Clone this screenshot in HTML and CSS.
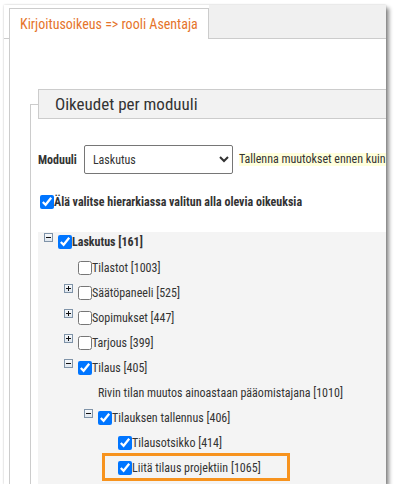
FILE: index.html
```html
<!DOCTYPE html>
<html lang="fi">
<head>
    <meta charset="UTF-8">
    <meta name="viewport" content="width=device-width, initial-scale=1.0">
    <title>Oikeudet</title>
    <link rel="stylesheet" href="styles.css">
</head>
<body>
    <div class="shot">
        <div class="tabs">
            <div class="tab active">Kirjoitusoikeus =&gt; rooli Asentaja</div>
            <div class="tab-fill"></div>
        </div>
        <div class="tab-body">
            <fieldset class="module">
                <legend>Oikeudet per moduuli</legend>

                <div class="module-row">
                    <label for="module">Moduuli</label>
                    <select id="module">
                        <option>Laskutus</option>
                    </select>
                    <span class="note">Tallenna muutokset ennen kuin</span>
                </div>

                <label class="skip"><input type="checkbox" checked>Älä valitse hierarkiassa valitun alla olevia oikeuksia</label>

                <div class="tree">
                    <ul>
                        <li>
                            <div class="row first"><span class="toggle minus"></span><input type="checkbox" checked><b>Laskutus [161]</b></div>
                            <ul>
                                <li><div class="row"><span class="toggle"></span><input type="checkbox"><span>Tilastot [1003]</span></div></li>
                                <li><div class="row"><span class="toggle plus"></span><input type="checkbox"><span>Säätöpaneeli [525]</span></div></li>
                                <li><div class="row"><span class="toggle plus"></span><input type="checkbox"><span>Sopimukset [447]</span></div></li>
                                <li><div class="row"><span class="toggle plus"></span><input type="checkbox"><span>Tarjous [399]</span></div></li>
                                <li>
                                    <div class="row"><span class="toggle minus"></span><input type="checkbox" checked><span>Tilaus [405]</span></div>
                                    <ul>
                                        <li><div class="row"><span class="toggle"></span><span>Rivin tilan muutos ainoastaan pääomistajana [1010]</span></div></li>
                                        <li>
                                            <div class="row"><span class="toggle minus"></span><input type="checkbox" checked><span>Tilauksen tallennus [406]</span></div>
                                            <ul>
                                                <li><div class="row"><span class="toggle"></span><input type="checkbox" checked><span>Tilausotsikko [414]</span></div></li>
                                                <li><div class="row marked"><span class="toggle"></span><input type="checkbox" checked><span>Liitä tilaus projektiin [1065]</span></div></li>
                                            </ul>
                                        </li>
                                    </ul>
                                </li>
                            </ul>
                        </li>
                    </ul>
                </div>
            </fieldset>
        </div>
    </div>
</body>
</html>
```

FILE: styles.css
```css
body {
    margin: 0;
    background: #fff;
    font-family: "Roboto Condensed", "Liberation Sans Narrow", "DejaVu Sans Condensed", Roboto, sans-serif;
    font-size: 12px;
    color: #333;
}

.shot {
    width: 382px;
    height: 479px;
    margin: 5px 0 0 4px;
    overflow: hidden;
    background: #fff;
    box-shadow: 3px 3px 4px rgba(0, 0, 0, 0.45), 0 0 2px rgba(0, 0, 0, 0.2);
}

/* tabs */
.tabs {
    display: flex;
    height: 33px;
    border-bottom: 1px solid #ccc;
    padding-left: 5px;
}

.tab {
    margin-top: 3px;
    margin-bottom: -1px;
    padding: 0 10px;
    line-height: 30px;
    font-size: 14px;
    white-space: nowrap;
}

.tab.active {
    background: #fff;
    color: #e5742b;
    border: 1px solid #ccc;
    border-bottom: none;
}

.tab-fill {
    flex: 1;
    background: #f0f0f0;
}

.tab-body {
    margin-left: 5px;
    border-left: 1px solid #ccc;
    height: 500px;
    padding-top: 1px;
}

/* module fieldset */
.module {
    margin: 49px 0 0 20px;
    padding: 0 0 0 7px;
    border: 1px solid #ccc;
    border-right: none;
    min-width: 0;
}

.module legend {
    width: 400px;
    box-sizing: border-box;
    height: 30px;
    padding: 0 16px;
    line-height: 28px;
    font-size: 17px;
    background: #f2f2f2;
    border: 1px solid #ccc;
    white-space: nowrap;
}

.module-row {
    display: flex;
    align-items: center;
    margin-top: 26px;
    white-space: nowrap;
}

.module-row label {
    font-weight: bold;
    margin-right: 7px;
}

.module-row select {
    flex: none;
    width: 149px;
    height: 29px;
    padding-left: 4px;
    font: inherit;
    color: #333;
    border: 1px solid #767676;
    border-radius: 2px;
    background: #fff;
}

.note {
    margin-left: 6px;
    background: #ffffdc;
    line-height: 13px;
}

.skip {
    display: flex;
    align-items: center;
    margin: 21px 0 0 2px;
    font-weight: bold;
    white-space: nowrap;
}

input[type="checkbox"] {
    width: 14px;
    height: 14px;
    margin: 0;
    flex: none;
}

/* tree */
.tree {
    margin-top: 23px;
    background: #f4f4f4;
    padding: 0 0 20px 6px;
}

.tree ul {
    list-style: none;
    margin: 0;
    padding: 0;
}

.tree ul ul {
    padding-left: 20px;
}

.row {
    display: flex;
    align-items: flex-start;
    height: 25px;
    white-space: nowrap;
    position: relative;
}

.row.first {
    height: 26px;
}

.row input {
    margin-top: 3px;
}

.row span:last-child,
.row b {
    line-height: 20px;
}

.toggle {
    width: 9px;
    height: 9px;
    margin: 1px 5px 0 0;
    flex: none;
    box-sizing: border-box;
}

.toggle.plus,
.toggle.minus {
    border: 1px solid #7f93a8;
    background: linear-gradient(#f7f9fb, #dfe6ee);
    position: relative;
}

.toggle.plus::before,
.toggle.minus::before {
    content: "";
    position: absolute;
    left: 1px;
    top: 3px;
    width: 5px;
    height: 1px;
    background: #111;
}

.toggle.plus::after {
    content: "";
    position: absolute;
    left: 3px;
    top: 1px;
    width: 1px;
    height: 5px;
    background: #111;
}

.row.marked::after {
    content: "";
    position: absolute;
    left: -2px;
    top: -5px;
    width: 182px;
    height: 22px;
    border: 3px solid #f7931e;
}
```
